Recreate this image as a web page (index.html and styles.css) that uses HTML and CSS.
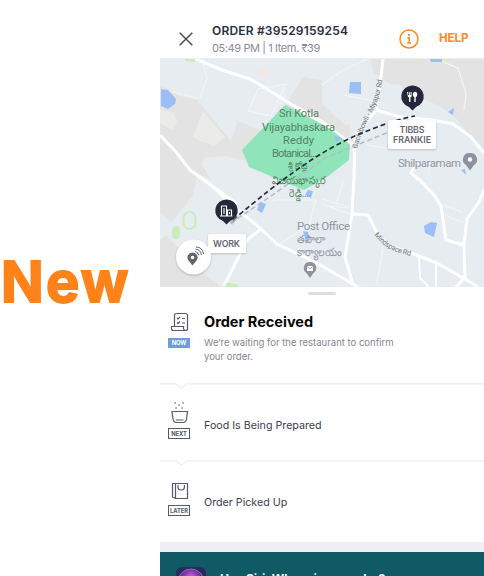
FILE: index.html
```html
<!DOCTYPE html>
<html lang="en">
<head>
<meta charset="utf-8">
<title>Order status</title>
<link rel="stylesheet" href="styles.css">
</head>
<body>
<main class="page">
  <aside class="label"><span class="new">New</span></aside>
  <section class="phone">
    <header class="header">
      <svg class="close" viewBox="0 0 14 14"><path d="M.7.7l12.6 12.6M13.3.7L.7 13.3"/></svg>
      <div class="order">
        <h1>ORDER #39529159254</h1>
        <p>05:49 PM | 1 Item. ₹39</p>
      </div>
      <svg class="info" viewBox="0 0 20 20"><circle cx="10" cy="10" r="9"/><circle class="dot" cx="10" cy="5.9" r="1.1"/><path d="M8.5 8.7H10.2V14M8.3 14H12"/></svg>
      <span class="help">HELP</span>
    </header>
    <svg class="map" viewBox="160 59 324 228">
      <rect x="160" y="59" width="324" height="228" fill="#e6ecf0"/>
      <g fill="#e3e3e3">
        <path d="M160 85L180 96 197 100 231 141 238 121 262 131 284 107 303 77 322 80 350 87V150L242 160 225 156 204 158 202 165 210 178 197 175 193 195 172 222 160 212z"/>
        <path d="M371 59H484V154L470 136 458 120 441 107 409 92 400 85 390 84 373 72z"/>
        <path d="M160 240L166 235 211 280 222 287H160z"/>
      </g>
      <path d="M322 78L409 95 435 111 449 135 390 120 345 125 322 104z" fill="#e6ecf0"/>
      <g fill="#ebebea"><path d="M160 109L174 113 177 122 173 131 160 123z"/><path d="M203 111L225 137 214 146 198 140 193 137z"/></g>
      <path d="M255 92L282 84 287 96 272 117 246 111z" fill="#eaeef1"/>
      <g fill="none" stroke="#f2f5f7" stroke-width="1.2">
        <path d="M203 63L207 78 200 98M160 89L198 98M248 112L258 89 288 84M248 111L271 116 285 86M322 85L343 70 367 59M344 95L383 103M436 59L458 68 466 94 464 110M322 205L348 208M337 202L343 181M350 214L325 205M383 249L376 286M271 202L274 200H316L309 225 275 247M322 199L349 207M442 205L462 212M445 215L463 223M420 160L413 174 419 179M430 160L429 176M355 160V178M322 272L327 270M366 145L387 148"/>
      </g>
      <g fill="none" stroke="#fff" stroke-width="3" stroke-linejoin="round">
        <path d="M196 59L222 70 250 79 267 89 289 103 323 124 353 145"/>
        <path d="M160 135L176 152 190 170 210 184 231 204 261 229 277 244 317 263 358 287"/>
        <path d="M197 175L237 204M261 229L247 240 224 286"/>
        <path d="M383 59L380 85 376 110 355 137 354 177 352 214 345 257 353 285"/>
        <path d="M376 110L400 117 432 120 453 124 471 137 484 153"/>
        <path d="M352 214L368 215 377 233 389 246 411 253 437 263 465 279 478 287"/>
        <path d="M415 175L434 195 441 206 446 240 464 245M484 190L479 202 467 219 464 245 465 277 456 287"/>
        <path d="M418 160L411 173 418 180" stroke-width="2.2"/>
        <path d="M419 256L420 278 429 287M436 264V287" stroke-width="1.8"/>
      </g>
      <path d="M285 105L322 124 350 141 349 160 327 177 304 190 282 181 249 167 242 150z" fill="#8fe5b9"/>
      <path d="M294 105L323 122 353 145" fill="none" stroke="#fff" stroke-width="2.5"/>
      <g fill="#9abef5">
        <path d="M161 89L168 90 176 99 175 104 168 109 161 106z"/><path d="M350 82H361V94L349 93z"/><path d="M430 59H442V62H431z"/><path d="M448 112L454 108 453 115z"/><path d="M334 136L342 138 336 142z"/><path d="M260 202L266 204 262 213 257 210z"/><path d="M308 190L313 191 311 198 305 195z"/><path d="M424 226L431 222 437 223 434 237 425 233z"/><path d="M303 231L308 232 310 240 306 242z"/><path d="M461 170L465 169 466 175z"/>
      </g>
      <g fill="#c8edbb"><path d="M185 59H195V62L186 61z"/><rect x="172" y="226" width="8" height="13" rx="4"/><path d="M227 282L238 285 239 287H225z"/></g>
      <rect x="183.500" y="212" width="12" height="17" rx="6" fill="none" stroke="#c8edbb" stroke-width="2"/>
      <rect x="258" y="69" width="9" height="8" fill="#f7e5e4"/>
      <g class="park">
        <text x="279" y="117" textLength="40">Sri Kotla</text>
        <text x="262" y="130.500" textLength="73">Vijayabhaskara</text>
        <text x="283" y="143.500" textLength="31">Reddy</text>
        <text x="272" y="157" textLength="45">Botanical...</text>
        <text class="small" x="288" y="169" textLength="20" lengthAdjust="spacingAndGlyphs">శ్రీ కోట్ల</text>
        <text x="272" y="184" textLength="54" lengthAdjust="spacingAndGlyphs">విజయభాస్కర</text>
        <text x="289" y="197" textLength="20" lengthAdjust="spacingAndGlyphs">రెడ్డి...</text>
      </g>
      <g class="place">
        <text x="398" y="166.500" textLength="63">Shilparamam</text>
        <text x="297" y="230" textLength="53">Post Office</text>
        <text x="297" y="243" textLength="28" lengthAdjust="spacingAndGlyphs">తపాలా</text>
        <text x="297" y="256" textLength="45" lengthAdjust="spacingAndGlyphs">కార్యాలయం</text>
      </g>
      <path id="miyapur" d="M357 149Q362 130 374 109Q381 93 383 76" fill="none"/>
      <path id="mindspace" d="M374 235Q387 252 412 256" fill="none"/>
      <text class="road"><textPath href="#miyapur" textLength="74">Gachibowli - Miyapur Rd</textPath></text>
      <text class="road"><textPath href="#mindspace" textLength="43">Mindspace Rd</textPath></text>
      <g fill="none" stroke-dasharray="5 3">
        <path d="M231 223L274 194 325 158 389 132" stroke="#b3bdc0" stroke-width="1.5"/>
        <path d="M233 220Q272 187 294 172Q332 144 372 129Q398 119 415 116" stroke="#292b41" stroke-width="1.7"/>
      </g>
      <path d="M229 213Q239 211 237 219L232 225 228 220z" fill="#999" opacity=".5"/>
      <g fill="#25273c">
        <path d="M412.500 85.500A11 11 0 0 1 416 107L412.500 110.500 409 107A11 11 0 0 1 412.500 85.500z"/>
        <path d="M226.500 199.500A11 11 0 0 1 230 221L226.500 224.500 223 221A11 11 0 0 1 226.500 199.500z"/>
      </g>
      <g fill="#fff"><path d="M407 92h1v3h.8v-3h1v3h.8v-3h1v4q0 1.200-1.200 1.500V102h-1.400V97.500q-1.200-.3-1.200-1.500z"/><ellipse cx="415" cy="94.500" rx="2.200" ry="2.700"/><path d="M414.300 96h1.400v6h-1.400z"/></g>
      <path d="M221.500 216V206H226.500V216zM227.500 210H231.500V216H227.500zM220 216H232.500M224 208v6M229.500 212v2" fill="none" stroke="#fff" stroke-width="1.1"/>
      <g fill="#8f919e"><path d="M470 153A6.500 6.500 0 0 1 474 165L470 170.500 466 165A6.500 6.500 0 0 1 470 153z"/><path d="M310 262A6 6 0 0 1 313.500 273L310 278 306.500 273A6 6 0 0 1 310 262z"/></g>
      <circle cx="470" cy="159.500" r="2.200" fill="#fff"/><path d="M307 266h6v5h-6z" fill="#fff"/><path d="M307 266.500l3 2.200 3-2.200" fill="none" stroke="#8f919e" stroke-width=".8"/>
      <g class="card"><rect x="388" y="120" width="48" height="29" rx="2"/><rect x="208" y="234" width="38" height="19" rx="2"/><circle cx="193.500" cy="257" r="17.500"/></g>
      <g class="pinlabel"><text x="399.500" y="133" textLength="25">TIBBS</text><text x="393" y="143" textLength="38">FRANKIE</text><text x="213" y="247" textLength="27">WORK</text></g>
      <path d="M192.500 252.500A5 5 0 0 1 196.500 260.500L192.500 265.500 188.500 260.500A5 5 0 0 1 192.500 252.500z" fill="#60646c"/><circle cx="192.500" cy="257.500" r="1.800" fill="#fff"/>
      <path d="M195 251.500q3 .5 4 3.800M195.500 249q5 .5 6 6M196 247q6.500 0 7.500 7" fill="none" stroke="#60646c"/>
    </svg>
    <div class="sheet">
      <div class="grip"></div>
      <article class="step current">
        <div class="status">
          <svg class="icon" viewBox="0 0 20 20"><path d="M4.500 14V3.500Q4.500 1.500 6.500 1.500H15.500Q17.500 1.500 17.500 3.500V16.500Q17.500 18.500 15.500 18.500H3.500Q1.500 18.500 1.500 16.500V14.500H13.500V16.500Q13.700 18.500 15.500 18.500M7 6l1 1 2-2M7 10.500l1 1 2-2M12 6.500h3M12 11h3"/></svg>
          <span class="badge">NOW</span>
        </div>
        <div class="body"><h2>Order Received</h2><p>We’re waiting for the restaurant to confirm<br>your order.</p></div>
      </article>
      <svg class="divider" viewBox="0 0 324 6"><path d="M0 .8H16L21.500 5 27 .8H324"/></svg>
      <article class="step prep">
        <div class="status">
          <svg class="icon tall" viewBox="0 0 20 23"><path d="M2 10.500H17.500L16.500 18Q16 21.500 13 21.500H6.500Q3.500 21.500 3 18zM6 19H13.500"/><path class="sparks" d="M5 2h.1M13 2h.1M9 4h.1M6 7h.1M12 7h.1"/></svg>
          <span class="badge">NEXT</span>
        </div>
        <h3>Food Is Being Prepared</h3>
      </article>
      <svg class="divider" viewBox="0 0 324 6"><path d="M0 .8H16L21.500 5 27 .8H324"/></svg>
      <article class="step pick">
        <div class="status">
          <svg class="icon" viewBox="0 0 20 20"><path d="M2.500 2.500H17.500V17.500H5.500L2.500 16zM5.500 2.500V17.500M8 4v2q0 3 3.200 3t3.200-3V4"/></svg>
          <span class="badge">LATER</span>
        </div>
        <h3>Order Picked Up</h3>
      </article>
    </div>
    <footer class="siri">
      <svg class="orb" viewBox="0 0 30 30"><defs><radialGradient id="glow" cy=".35"><stop stop-color="#ef62cd"/><stop offset=".5" stop-color="#8f3dba"/><stop offset="1" stop-color="#3a237a"/></radialGradient></defs><rect width="30" height="30" rx="6" fill="#2b2a5a"/><circle cx="15" cy="15" r="13" fill="url(#glow)" stroke="#8571bc"/></svg>
      <strong>Hey Siri, Where is my order?</strong>
    </footer>
  </section>
</main>
</body>
</html>
```
FILE: styles.css
```css
* { box-sizing: border-box; }
body { margin: 0; background: #fff; font-family: Inter, "Noto Sans", sans-serif; }
h1, h2, h3, p { margin: 0; }
svg { display: block; flex: none; }
.page { display: flex; width: 484px; height: 576px; overflow: hidden; }
.label { width: 160px; flex: none; padding-top: 243px; color: #ff821b; }
.new { display: block; font: 700 56px/78px Inter, sans-serif; letter-spacing: 2.2px; -webkit-text-stroke: 1.8px #ff821b; padding-left: 1px; }
.phone { width: 324px; flex: none; display: flex; flex-direction: column; }
.header { height: 59px; flex: none; display: flex; align-items: flex-start; padding-top: 22px; background: #fefefe; border-bottom: 1px solid #eee; }
.close { width: 14px; height: 14px; margin: 10px 19px 0 19px; fill: none; stroke: #484848; stroke-width: 1.4; }
.order { width: 187px; white-space: nowrap; }
.order h1 { font-size: 12px; line-height: 17px; font-weight: 600; letter-spacing: .18px; color: #2b2d44; }
.order p { font-size: 11px; line-height: 18px; letter-spacing: -.4px; color: #8b8d97; }
.info { width: 20px; height: 20px; margin-top: 7px; fill: none; stroke: #ff8927; stroke-width: 1.5; }
.info .dot { fill: #ff8927; stroke: none; }
.help { margin: 8px 0 0 20px; font-size: 11.5px; line-height: 17px; font-weight: 700; color: #ff8927; }
.map { width: 324px; height: 228px; }
.map text { font-family: Roboto, "Noto Sans", sans-serif; }
.park { fill: #548263; font-size: 11px; }
.park .small { font-size: 9px; }
.place { fill: #9295a3; font-size: 11.5px; }
.map .road { fill: #73777b; font-size: 7.3px; stroke: #e9eef1; stroke-width: 1px; paint-order: stroke; }
.card { fill: #fff; filter: drop-shadow(0 1px 1px #0003); }
.map .pinlabel text { font: 600 8.8px Inter, sans-serif; fill: #656672; }
.sheet { height: 255px; display: flex; flex-direction: column; }
.grip { width: 28px; height: 3px; margin: 5px auto 0 148px; background: #dedede; border-radius: 2px; flex: none; }
.step { display: flex; }
.current { height: 88px; padding-top: 17px; }
.status { width: 44px; flex: none; display: flex; flex-direction: column; align-items: flex-start; padding-left: 8px; }
.icon { width: 20px; height: 20px; margin-left: 2px; fill: none; stroke: #56586b; stroke-width: 1.2; }
.tall { height: 23px; }
.sparks { stroke-width: 1.5; stroke-linecap: round; }
.badge { width: 22px; height: 11px; margin-top: 4px; border: 1px solid #56586b; color: #56586b; font-size: 5.8px; line-height: 9px; font-weight: 700; text-align: center; letter-spacing: -.1px; }
.current .badge { height: 10px; margin-top: 6px; background: #6f9cdf; border-color: #6f9cdf; color: #fff; line-height: 8px; }
.body { white-space: nowrap; }
.body h2 { font-size: 14.5px; line-height: 18px; font-weight: 700; color: #050505; padding-top: 1px; }
.body p { margin-top: 5px; font-size: 9.5px; line-height: 13.5px; color: #858590; }
.divider { width: 324px; height: 6px; fill: none; stroke: #eeeeef; stroke-width: 1.3; }
.prep { height: 71px; padding-top: 12px; }
.pick { height: 76px; padding-top: 15px; }
.step h3 { font-size: 10.7px; line-height: 16px; font-weight: 400; color: #3b3d50; }
.prep h3 { margin-top: 17px; }
.pick h3 { margin-top: 14px; }
.siri { height: 34px; flex: none; display: flex; border-top: 10px solid #efeff4; background: #0f5a65; padding: 15px 0 0 16px; overflow: hidden; }
.siri strong { margin: 3px 0 0 14px; color: #fff; font-size: 12px; line-height: 17px; font-weight: 700; }
.orb { width: 30px; height: 30px; }
```
